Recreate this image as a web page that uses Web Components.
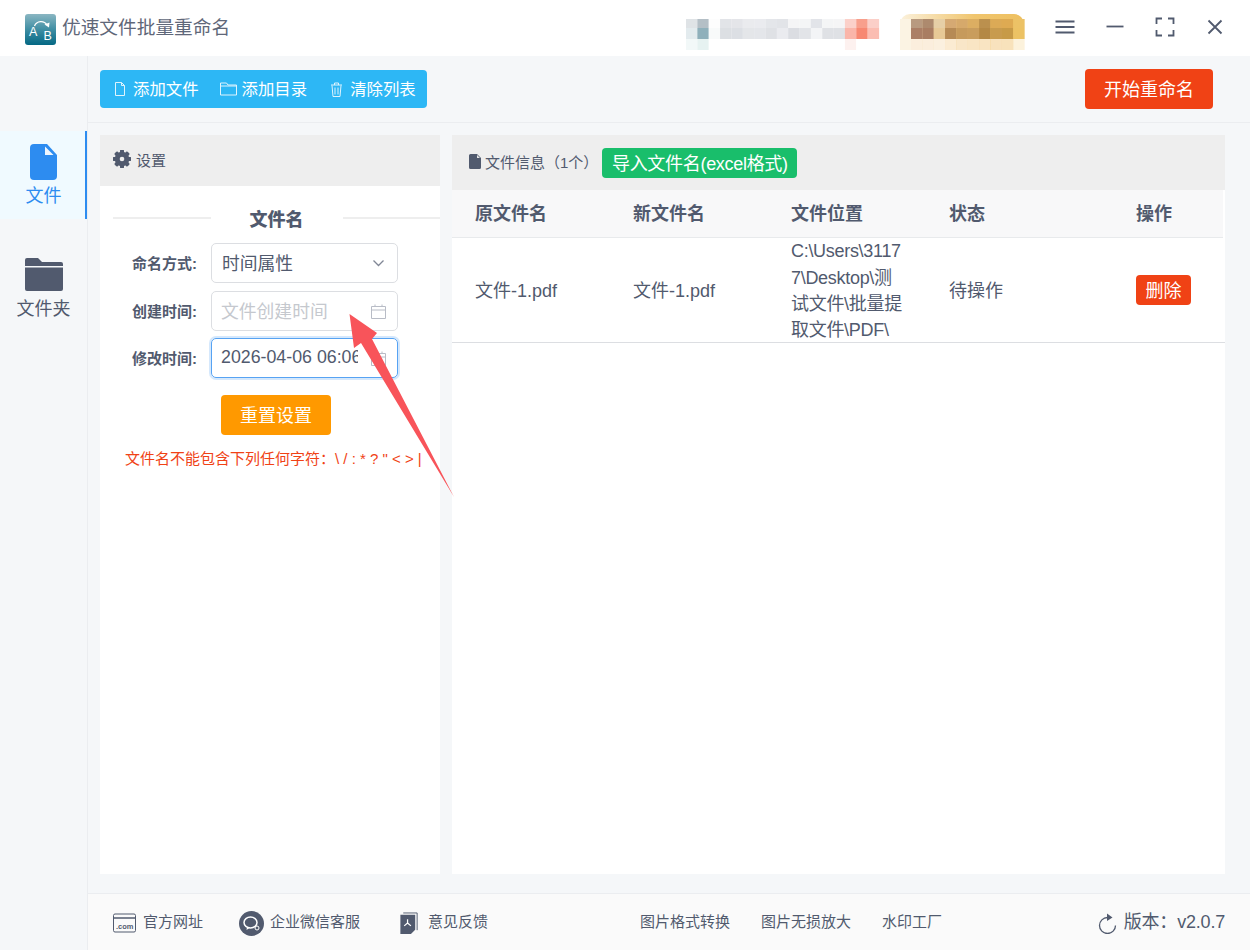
<!DOCTYPE html>
<html lang="zh">
<head>
<meta charset="utf-8">
<title>优速文件批量重命名</title>
<style>
  html, body { margin: 0; height: 100%; background: #f5f7f9; overflow: hidden; }
  body { font-family: "Liberation Sans", "Noto Sans CJK SC", sans-serif; color: #515a6e; }
</style>
</head>
<body>
<app-shell>
  <title-bar slot="top"></title-bar>
  <side-nav slot="side">
    <nav-item active label="文件">
      <svg width="27" height="36" viewBox="0 0 27 36"><path d="M4 0h13l10 11v21a4 4 0 0 1-4 4H4a4 4 0 0 1-4-4V4a4 4 0 0 1 4-4z" fill="#2d8cf0"/><path d="M15 2.500l8.500 8.500H15z" fill="#eef6fe"/></svg>
    </nav-item>
    <nav-item label="文件夹">
      <svg style="margin-bottom:2px" width="38" height="33" viewBox="0 0 38 33"><path d="M2 0h11l4 4h19a2 2 0 0 1 2 2v2H0V2a2 2 0 0 1 2-2z" fill="#515a6e"/><path d="M0 9.500h38V31a2 2 0 0 1-2 2H2a2 2 0 0 1-2-2z" fill="#515a6e"/></svg>
    </nav-item>
  </side-nav>
  <tool-bar slot="tools"></tool-bar>
  <settings-panel slot="left"></settings-panel>
  <file-panel slot="right"></file-panel>
  <foot-bar slot="bottom"></foot-bar>
</app-shell>

<script>
class AppShell extends HTMLElement {
  constructor() {
    super();
    this.attachShadow({ mode: "open" });
    this.shadowRoot.innerHTML = `
      <style>
        :host { display: flex; flex-direction: column; height: 950px; position: relative; }
        #middle { flex: 1; display: flex; min-height: 0; }
        #main { flex: 1; display: flex; flex-direction: column; min-width: 0; }
        #panels { flex: 1; display: flex; gap: 12px; padding: 12px 25px 19px 12px; min-height: 0; }
        #arrow { position: absolute; left: 340px; top: 305px; }
      </style>
      <slot name="top"></slot>
      <div id="middle">
        <slot name="side"></slot>
        <div id="main">
          <slot name="tools"></slot>
          <div id="panels">
            <slot name="left"></slot>
            <slot name="right"></slot>
          </div>
          <slot name="bottom"></slot>
        </div>
      </div>
      <svg id="arrow" width="120" height="200" viewBox="340 305 120 200">
        <path d="M349.500 314L377 333L372 339L454 497L361 343L354 348Z" fill="#f8545a"/>
      </svg>
    `;
  }
}
customElements.define("app-shell", AppShell);

class BlurPatch extends HTMLElement {
  connectedCallback() {
    this.attachShadow({ mode: "open" });
    const rows = [
      [19, 9, ["#dfe3e6","#b4bfc6","#fdfdfd","#e2e4e8","#e4e5e9","#eaebee","#eaebef","#e4e6ea","#e2e4e8","#f5f5f6","#f4f5f6","#e2e4e9","#f4f5f6","#f5f5f6","#fbd0c9","#f89f8c","#fbcfc8"]],
      [28, 11, ["#e3ebee","#8fb0bb","#f8fafa","#dcdfe3","#dcdfe4","#e4e6e9","#e4e6ea","#dfe1e5","#eaebef","#dbdde2","#e2e4e8","#f3f4f6","#dfe1e5","#dfe1e5","#fab5a9","#f78872","#fbbdb2"]],
      [39, 11, ["#f2f8f8","#e6f2f1","#fff","#fff","#fff","#fff","#fff","#fff","#fff","#fff","#fff","#fff","#fff","#fff","#fdf1ef","#fff","#fff"]],
    ];
    const gold = [
      [19, 9, ["#b89a80","#ad8a6e","#e6cfa6","#d5a973","#d6a96b","#dcae62","#bb904e","#dcaa56","#deaa52","#ecc266"]],
      [28, 11, ["#ab7f66","#a97d62","#e7c996","#b68a55","#c69a5c","#c99d5d","#b48845","#c89b4e","#c79a47","#ecc264"]],
      [39, 11, ["#fbeedd","#fbeedd","#fbf0df","#fbebd2","#f9e6c8","#f9e5c4","#f9e4c2","#f8e2bd","#f8e2bb","#fcf2dc"]],
    ];
    let cells = "";
    rows.forEach(([y, h, cols]) => cols.forEach((c, i) => {
      cells += `<rect x="${686 + i * 11.35}" y="${y}" width="11.500" height="${h}" fill="${c}"/>`;
    }));
    gold.forEach(([y, h, cols]) => cols.forEach((c, i) => {
      cells += `<rect x="${911 + i * 11.35}" y="${y}" width="11.500" height="${h}" fill="${c}"/>`;
    }));
    this.shadowRoot.innerHTML = `
      <style>
        :host { display: block; position: absolute; left: 650px; top: 0; }
        svg { display: block; }
      </style>
      <svg width="400" height="56" viewBox="650 0 400 56">
        <defs><linearGradient id="g" x1="0" x2="1" y1="0" y2="0"><stop offset="0" stop-color="#fbf1dc"/><stop offset=".6" stop-color="#f0c56e"/><stop offset="1" stop-color="#eec060"/></linearGradient></defs>
        <path d="M900 50V24a10 10 0 0 1 10-10h104a10 10 0 0 1 10 10v26z" fill="url(#g)"/>
        <rect x="900" y="19" width="11" height="31" fill="#fbf3e3"/>
        ${cells}
      </svg>`;
  }
}
customElements.define("blur-patch", BlurPatch);

class TitleBar extends HTMLElement {
  constructor() {
    super();
    this.attachShadow({ mode: "open" });
    this.shadowRoot.innerHTML = `
      <style>
        :host { display: flex; align-items: center; height: 56px; background: #fff; padding-left: 25px; position: relative; flex: none; }
        #logo { margin: 3px 6px 0 0; flex: none; display: block; }
        #name { font-size: 18.700px; color: #5f6779; white-space: nowrap; padding-bottom: 5px; }
        #btns { margin-left: auto; display: flex; padding-right: 10px; margin-bottom: 3px; }
        #btns svg { display: block; margin: 0 15px; }
      </style>
      <svg id="logo" width="31" height="31" viewBox="0 0 31 31">
        <defs><linearGradient id="lg" x1="0" x2="0" y1="0" y2="1"><stop offset="0" stop-color="#8ab6c2"/><stop offset=".5" stop-color="#3f8ea3"/><stop offset="1" stop-color="#046884"/></linearGradient></defs>
        <rect width="31" height="31" rx="3" fill="url(#lg)"/>
        <path d="M9.500 12a7 7 0 0 1 12.500 -1" fill="none" stroke="#fff" stroke-width="1.300"/>
        <path d="M19.500 10.500l4.500 3 .500-5z" fill="#fff"/>
        <text x="4" y="22" font-family="Liberation Sans" font-size="12.500" fill="#fff">A</text>
        <text x="18.500" y="26" font-family="Liberation Sans" font-size="12.500" fill="#fff">B</text>
      </svg>
      <span id="name">优速文件批量重命名</span>
      <blur-patch></blur-patch>
      <div id="btns">
        <svg width="20" height="20" viewBox="0 0 20 20" fill="none" stroke="#515a6e" stroke-width="1.800"><path d="M.500 4.500h19M.500 10h19M.500 15.500h19"/></svg>
        <svg width="20" height="20" viewBox="0 0 20 20" fill="none" stroke="#515a6e" stroke-width="1.800"><path d="M1.500 9.500h17"/></svg>
        <svg width="20" height="20" viewBox="0 0 20 20" fill="none" stroke="#515a6e" stroke-width="1.800"><path d="M7 1.500H1.500V7M13 1.500h5.500V7M1.500 13v5.500H7M18.500 13v5.500H13"/></svg>
        <svg width="20" height="20" viewBox="0 0 20 20" fill="none" stroke="#515a6e" stroke-width="1.800"><path d="M3.500 3.500l13 13M16.500 3.500l-13 13"/></svg>
      </div>
    `;
  }
}
customElements.define("title-bar", TitleBar);

class SideNav extends HTMLElement {
  constructor() {
    super();
    this.attachShadow({ mode: "open" });
    this.shadowRoot.innerHTML = `
      <style>
        :host { display: flex; flex-direction: column; flex: none; width: 87px; border-right: 1px solid #ebedf0; padding-top: 75px; gap: 26px; box-sizing: content-box; }
      </style>
      <slot></slot>
    `;
  }
}
customElements.define("side-nav", SideNav);

class NavItem extends HTMLElement {
  constructor() {
    super();
    this.attachShadow({ mode: "open" });
    this.shadowRoot.innerHTML = `
      <style>
        :host { display: flex; flex-direction: column; align-items: center; height: 88px; box-sizing: border-box; padding-top: 13px; font-size: 18px; line-height: 26px; gap: 3px; border-right: 2px solid transparent; padding-left: 2px; }
        :host([active]) { background: #f0faff; border-right-color: #2d8cf0; color: #2d8cf0; }
        ::slotted(svg) { display: block; }
      </style>
      <slot></slot>
      <span id="t"></span>
    `;
  }
  connectedCallback() {
    this.shadowRoot.querySelector("#t").textContent = this.getAttribute("label");
  }
}
customElements.define("nav-item", NavItem);

class ToolBar extends HTMLElement {
  constructor() {
    super();
    this.attachShadow({ mode: "open" });
    this.shadowRoot.innerHTML = `
      <style>
        :host { display: flex; align-items: center; justify-content: space-between; flex: none; height: 67px; box-sizing: border-box; border-bottom: 1px solid #ebedf0; padding: 0 37px 0 12px; }
        #group { display: flex; height: 38px; box-sizing: border-box; align-items: center; background: #2db7f5; border-radius: 4px; color: #fff; font-size: 16.400px; padding: 0 11px 2px 14px; }
        #group span { display: flex; align-items: center; white-space: nowrap; }
        #group svg { display: block; margin-top: 2px; opacity: .85; }
        #go { height: 40px; width: 128px; box-sizing: border-box; padding-bottom: 3px; border-radius: 4px; background: #f04215; color: #fff; font-size: 18px; display: flex; align-items: center; justify-content: center; }
      </style>
      <div id="group">
        <span style="gap:7px;margin-right:21px"><svg width="12" height="14" viewBox="0 0 12 14" fill="none" stroke="#fff" stroke-width="1"><path d="M1.500 .500h6l3 3v10h-9zM7.500 .500v3h3"/></svg>添加文件</span>
        <span style="gap:5px;margin-right:23px"><svg width="17" height="14" viewBox="0 0 17 14" fill="none" stroke="#fff" stroke-width="1"><path d="M.500 1h6l1.500 2h8.500v10H.500zM.500 4h16"/></svg>添加目录</span>
        <span style="gap:7px"><svg width="13" height="15" viewBox="0 0 13 15" fill="none" stroke="#fff" stroke-width="1"><path d="M1 3h11M4.500 3V1h4v2M2 3.500l1 11h7l1-11M5 5.500v7M8 5.500v7"/></svg>清除列表</span>
      </div>
      <div id="go">开始重命名</div>
    `;
  }
}
customElements.define("tool-bar", ToolBar);

class FormRow extends HTMLElement {
  constructor() {
    super();
    this.attachShadow({ mode: "open" });
    this.shadowRoot.innerHTML = `
      <style>
        :host { display: flex; align-items: center; height: 40px; }
        :host([focused]) { margin-top: -1px; }
        #lab { width: 97px; text-align: right; font-size: 15px; font-weight: 700; white-space: nowrap; flex: none; margin-right: 14px; padding-bottom: 2px; }
        #box { width: 187px; height: 40px; box-sizing: border-box; border: 1px solid #dcdee2; border-radius: 5px; display: flex; align-items: center; padding: 0 10px 2px 9px; font-size: 17.800px; position: relative; }
        :host([focused]) #box { border-color: #57a3f3; box-shadow: 0 0 0 2px rgba(45,140,240,.2); }
        :host([placeholder]) #val { color: #c5c8ce; }
        #val { flex: 1; overflow: hidden; white-space: nowrap; min-width: 0; }
        svg { display: block; flex: none; margin: 2px 0 0 12px; }
      </style>
      <div id="lab"></div>
      <div id="box"><div id="val"><slot></slot></div>
        <svg id="ic" width="17" height="15" viewBox="0 0 17 15" fill="none" stroke="#b8bcc6" stroke-width="1"><path d="M1.500 2.500h14v12h-14zM1.500 6h14M5 .500v2M12 .500v2"/></svg>
      </div>
    `;
  }
  connectedCallback() {
    this.shadowRoot.querySelector("#lab").textContent = this.getAttribute("label") + ":";
    if (this.hasAttribute("select")) {
      const ic = this.shadowRoot.querySelector("#ic");
      ic.innerHTML = '<path d="M3.500 4.500L8.500 9.500L13.500 4.500" stroke="#808695" stroke-width="1.300"/>';
      this.shadowRoot.querySelector("#box").style.paddingLeft = "10px";
    }
  }
}
customElements.define("form-row", FormRow);

class SettingsPanel extends HTMLElement {
  constructor() {
    super();
    this.attachShadow({ mode: "open" });
    let teeth = "";
    for (let a = 0; a < 360; a += 45) teeth += `<rect x="7" y="0" width="4" height="18" rx="1" transform="rotate(${a} 9 9)" fill="#515a6e"/>`;
    this.shadowRoot.innerHTML = `
      <style>
        :host { display: flex; flex-direction: column; width: 340px; flex: none; background: #fff; }
        #head { height: 51px; box-sizing: border-box; padding: 0 0 3px 13px; background: #eee; display: flex; align-items: center; font-size: 15px; gap: 5px; flex: none; }
        #head svg { display: block; }
        #title { display: flex; align-items: center; padding-left: 13px; height: 24px; margin-top: 20px; font-size: 18px; font-weight: 700; white-space: nowrap; }
        #title i { flex: 1; height: 2px; background: #eee; }
        #title b { padding: 0 39px; }
        #rows { margin-top: 13px; display: flex; flex-direction: column; gap: 8px; }
        #reset { margin: 17px 0 0 121px; width: 110px; height: 40px; box-sizing: border-box; padding-bottom: 2px; border-radius: 4px; background: #f90; color: #fff; font-size: 18px; display: flex; align-items: center; justify-content: center; }
        #note { margin: 15px 0 0 25px; color: #f04215; font-size: 15px; white-space: nowrap; line-height: 18px; }
      </style>
      <div id="head">
        <svg width="18" height="18" viewBox="0 0 18 18">${teeth}<circle cx="9" cy="9" r="5.500" fill="none" stroke="#515a6e" stroke-width="3.500"/><circle cx="9" cy="9" r="2.300" fill="#eee"/></svg>
        设置
      </div>
      <div id="title"><i></i><b>文件名</b><i></i></div>
      <div id="rows">
        <form-row label="命名方式" select>时间属性</form-row>
        <form-row label="创建时间" placeholder>文件创建时间</form-row>
        <form-row label="修改时间" focused>2026-04-06 06:06:12</form-row>
      </div>
      <div id="reset">重置设置</div>
      <div id="note">文件名不能包含下列任何字符：\\ / : * ? " &lt; &gt; |</div>
    `;
  }
}
customElements.define("settings-panel", SettingsPanel);

class FilePanel extends HTMLElement {
  constructor() {
    super();
    this.attachShadow({ mode: "open" });
    this.shadowRoot.innerHTML = `
      <style>
        :host { display: flex; flex-direction: column; flex: 1; min-width: 0; background: #fff; }
        #head { height: 55px; box-sizing: border-box; padding: 0 0 3px 17px; background: #eee; display: flex; align-items: center; font-size: 15px; flex: none; white-space: nowrap; }
        #head svg { display: block; margin: 0 4px 0 0; }
        #import { margin: 4px 0 0 4px; height: 30px; width: 195px; box-sizing: border-box; padding-bottom: 2px; background: #19be6b; color: #fff; border-radius: 4px; font-size: 18px; letter-spacing: -.3px; display: flex; align-items: center; justify-content: center; }
        #table { display: grid; grid-template-columns: 158px 158px 158px 187px 110px; width: 771px; font-size: 18px; }
        .h { height: 48px; box-sizing: border-box; background: #f8f8f9; font-weight: 700; display: flex; align-items: center; padding: 0 0 3px 23px; border-bottom: 1px solid #e8eaec; }
        .c { height: 105px; box-sizing: border-box; border-bottom: 1px solid #dcdee2; display: flex; align-items: center; padding: 0 0 3px 23px; }
        .row-end { margin-right: -2px; }
        #path { line-height: 26.300px; letter-spacing: -.3px; white-space: nowrap; margin-top: 5px; }
        #del { background: #f04215; color: #fff; height: 30px; width: 55px; box-sizing: border-box; padding-bottom: 2px; margin-top: 3px; border-radius: 4px; display: flex; align-items: center; justify-content: center; }
      </style>
      <div id="head">
        <svg width="12" height="15" viewBox="0 0 12 15"><path d="M1.500 0h6.500l4 4v9.500a1.500 1.500 0 0 1-1.500 1.500h-9A1.500 1.500 0 0 1 0 13.500v-12A1.500 1.500 0 0 1 1.500 0z" fill="#515a6e"/><path d="M8 1l3 3h-3z" fill="#e6e6e6"/></svg>
        文件信息（1个）
        <div id="import">导入文件名(excel格式)</div>
      </div>
      <div id="table">
        <div class="h">原文件名</div><div class="h">新文件名</div><div class="h">文件位置</div><div class="h">状态</div><div class="h">操作</div>
        <div class="c">文件-1.pdf</div>
        <div class="c">文件-1.pdf</div>
        <div class="c"><div id="path">C:\\Users\\3117<br>7\\Desktop\\测<br>试文件\\批量提<br>取文件\\PDF\\</div></div>
        <div class="c">待操作</div>
        <div class="c row-end"><div id="del">删除</div></div>
      </div>
    `;
  }
}
customElements.define("file-panel", FilePanel);

class FootBar extends HTMLElement {
  constructor() {
    super();
    this.attachShadow({ mode: "open" });
    this.shadowRoot.innerHTML = `
      <style>
        :host { display: flex; align-items: center; flex: none; height: 57px; box-sizing: border-box; background: #fafafa; border-top: 1px solid #ebedf0; padding: 0 25px 4px 25px; font-size: 15px; white-space: nowrap; }
        span { display: flex; align-items: center; }
        svg { display: block; flex: none; margin-top: 6px; }
        #ver { margin-left: auto; font-size: 18px; gap: 7px; }
        #ver i { font-style: normal; letter-spacing: -.2px; }
      </style>
      <span style="gap:7px;margin-right:36px">
        <svg width="23" height="20" viewBox="0 0 23 20" fill="none" stroke="#515a6e"><rect x=".500" y="1" width="22" height="18" rx="1.500"/><path d="M.500 5h22" stroke-width="1.500"/><text x="3" y="16" font-family="Liberation Sans" font-size="7.500" font-weight="700" fill="#515a6e" stroke="none">.com</text></svg>
        官方网址
      </span>
      <span style="gap:6px;margin-right:40px">
        <svg width="25" height="25" viewBox="0 0 25 25"><circle cx="12.500" cy="12.500" r="12.500" fill="#515a6e"/><ellipse cx="11.500" cy="11.500" rx="6.500" ry="5.500" fill="none" stroke="#fff" stroke-width="1.500"/><path d="M8 16l-.500 3 3-2z" fill="#fff"/><circle cx="18" cy="17" r="2" fill="none" stroke="#fff"/></svg>
        企业微信客服
      </span>
      <span style="gap:10px;margin-right:152px">
        <svg width="18" height="22" viewBox="0 0 18 23"><path d="M3 1h14.500v18" fill="none" stroke="#515a6e"/><path d="M0 3h15.500v15.500L11 23H0z" fill="#515a6e"/><path d="M7.500 7.500v4l-3.500 3M7.500 11.500l3.500 3" fill="none" stroke="#fff" stroke-width="1.300"/></svg>
        意见反馈
      </span>
      <span style="margin-right:31px">图片格式转换</span>
      <span style="margin-right:31px">图片无损放大</span>
      <span>水印工厂</span>
      <span id="ver">
        <svg width="19" height="21" viewBox="0 0 19 21" fill="none" stroke="#515a6e" stroke-width="1.300"><path d="M9.500 4.500a8 8 0 1 0 8 8"/><path d="M9 .500l5.500 4-5.500 3.500z" fill="#515a6e" stroke="none"/></svg>
        <i>版本：v2.0.7</i>
      </span>
    `;
  }
}
customElements.define("foot-bar", FootBar);
</script>
</body>
</html>
